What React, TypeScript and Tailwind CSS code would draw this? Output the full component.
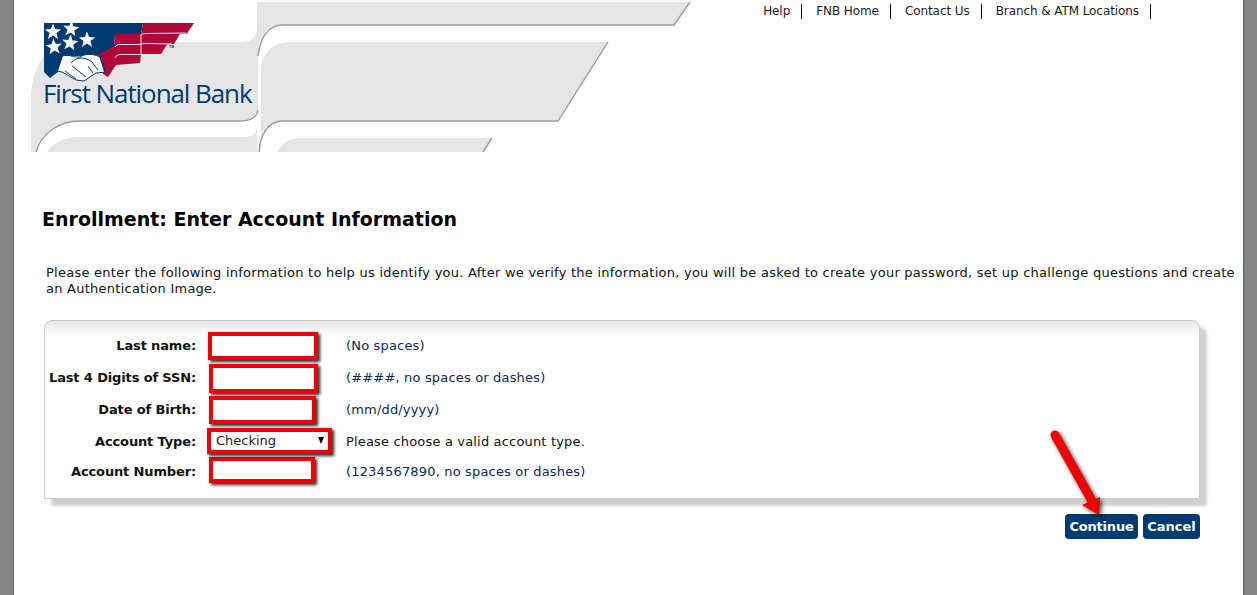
import React from "react";

function starPoints(cx: number, cy: number, r: number, rot = 0) {
  const pts: string[] = [];
  for (let i = 0; i < 10; i++) {
    const rad = i % 2 === 0 ? r : r * 0.42;
    const a = -Math.PI / 2 + (i * Math.PI) / 5 + rot;
    pts.push(`${(cx + rad * Math.cos(a)).toFixed(1)},${(cy + rad * Math.sin(a)).toFixed(1)}`);
  }
  return pts.join(" ");
}

function Banner() {
  return (
    <svg width="720" height="152" viewBox="0 0 720 152" className="absolute left-0 top-0">
      <g fill="#e5e5e5">
        <path d="M257,2 L690,2 L674,25 L283,25 C265,25 258,40 258,53 L258,108 C258,116 252,121 240,121 L80,121 C60,121 42,132 36,152 L31,152 L31,100 C31,70 45,42 70,42 L243,42 C252,42 257,36 257,28 Z" />
        <path d="M608,42 L558,121 L283,121 C268,121 260,135 259,152 L261,152 L261,70 C261,55 272,42 290,42 Z" />
        <path d="M47,152 C52,143 65,137 80,137 L245,137 C252,137 257,133 257,127 L257,152 Z" />
        <path d="M277,152 C282,143 290,138 300,138 L492,138 L483,152 Z" />
      </g>
      <g fill="none" stroke="#9b9b9b" strokeWidth="1.4">
        <path d="M690,2 L674,25 L283,25 C268,25 260,38 258,56" />
        <path d="M258,110 C257,116 252,121 240,121 L80,121 C60,121 42,132 36,152" />
        <path d="M608,42 L558,121 L283,121 C268,121 260,135 259,152" />
        <path d="M492,138 L483,152" />
      </g>
      <path d="M44,23 L143,23 L141,34 L115,35 L114,47 L97,56 L62,56 L58,72 L50,78 L44,72 Z" fill="#003a70" />
      <path d="M143,23 L194,23 L187,33.5 L180,34 L174,44 L167,44.5 L161,54 L141,54 L140,63 L116,65 L108,77 L103,74 L102,58 L97,55 L114,47 L115,34 L141,34 Z" fill="#b0063a" />
      <g fill="none" stroke="#f4e6ea" strokeWidth="1">
        <path d="M140,36 C141,34 143,33.5 146,33.5 L186,33" />
        <path d="M115,47 C116,45 118,44.5 121,44.5 L139,44.5 C141,44 143,43.5 146,43.5 L172,44" />
        <path d="M115,58 C116,55.5 118,54.5 121,54.5 L141,54.5" />
        <path d="M141,35 L141,54" />
      </g>
      <g fill="#ffffff">
        {[[53,32,0],[71,29,0.1],[87,40,0],[70,43,0.1],[54,47,-0.1]].map(([x,y,r],i)=>(
          <polygon key={i} points={starPoints(x,y,8.5,r)} />
        ))}
      </g>
      <path d="M62,56 C70,54 75,58 80,57 C86,53 94,54 100,57 L106,72 L96,73 L84,81 L76,80 L62,72 L57,71 Z" fill="#ffffff" stroke="#003a70" strokeWidth="1" />
      <path d="M71,63 C76,57 84,56 92,62 L98,70 M65,71 L76,79 M72,66 L86,77 M88,66 L93,73" fill="none" stroke="#003a70" strokeWidth="1" />
      <path d="M100,56 L105,72" stroke="#003a70" strokeWidth="1.8" />
      <path d="M62,56 L57,71" stroke="#003a70" strokeWidth="1.8" />
      <text x="169" y="48" fontSize="3.5" fontWeight="700" fill="#003a70" fontFamily="'Liberation Sans',sans-serif">TM</text>
    </svg>
  );
}

const links = ["Help", "FNB Home", "Contact Us", "Branch & ATM Locations"];

const fieldBox = "h-full border-[4px] border-[#f00000] bg-white shadow-[2px_2px_3px_rgba(0,0,0,0.85)]";

const rows: { label: string; row: string; text: string; field: React.ReactNode; hint: string; dark?: boolean }[] = [
  { label: "Last name:", row: "mt-[11px] h-[28px]", text: "pb-px", field: <input type="text" className={`ml-px w-[110px] ${fieldBox}`} />, hint: "(No spaces)" },
  { label: "Last 4 Digits of SSN:", row: "mt-[4px] h-[29px]", text: "pb-px", field: <input type="text" className={`ml-[2px] w-[109px] ${fieldBox}`} />, hint: "(####, no spaces or dashes)" },
  { label: "Date of Birth:", row: "mt-[3px] h-[28px]", text: "", field: <input type="text" className={`ml-[2px] w-[107px] ${fieldBox}`} />, hint: "(mm/dd/yyyy)" },
  {
    label: "Account Type:",
    row: "mt-[4px] h-[26px]",
    text: "pt-px",
    field: (
      <div className={`relative flex w-[125px] items-center pl-[5px] text-[13px] text-[#222] ${fieldBox}`}>
        Checking
        <span className="absolute right-[4px] top-[5px] h-0 w-0 border-x-[3.5px] border-t-[7px] border-x-transparent border-t-black" />
      </div>
    ),
    hint: "Please choose a valid account type.",
    dark: true,
  },
  { label: "Account Number:", row: "mt-[3px] h-[26px]", text: "pt-[3px]", field: <input type="text" className={`ml-[2px] w-[106px] ${fieldBox}`} />, hint: "(1234567890, no spaces or dashes)" },
];

export default function App() {
  return (
    <div className="h-[595px] overflow-hidden bg-[#848484] px-[13px] font-['DejaVu_Sans','Liberation_Sans',sans-serif] text-[#111]">
      <div className="relative h-full border-x border-[#566] bg-white">
        <div className="relative -ml-[14px] h-[152px]">
          <Banner />
          <div className="absolute left-[43px] top-[76px] font-['Open_Sans',sans-serif] text-[26px] font-medium leading-[34px] tracking-[-1.08px] whitespace-nowrap text-[#003a70]">
            First National Bank
          </div>
        </div>
        <nav className="absolute right-[92px] top-[4px] flex text-[12px] leading-[15px] tracking-[-0.08px] text-[#1a1a1a]">
          {links.map((l) => (
            <span key={l} className="border-r border-black pl-[14px] pr-[11px] first:pl-0">
              {l}
            </span>
          ))}
        </nav>

        <h1 className="ml-[28px] mt-[55px] text-[19px] leading-[24px] font-bold text-black">
          Enrollment: Enter Account Information
        </h1>
        <p className="ml-[32px] mr-[3px] mt-[34px] text-[13px] leading-[16px] tracking-[0.25px] text-[#111]">
          Please enter the following information to help us identify you. After we verify the information, you will be asked to create your password, set up challenge questions and create an Authentication Image.
        </p>

        <div className="ml-[30px] mt-[23px] h-[179px] w-[1156px] rounded-t-[8px] border border-[#cccccc] bg-[linear-gradient(#e6e6e6,#ffffff_15px)] shadow-[7px_7px_3px_#d3cfcf]">
          {rows.map((r) => (
            <div key={r.label} className={`flex items-stretch ${r.row}`}>
              <label className={`flex w-[151px] items-center justify-end text-[13px] font-bold tracking-[-0.14px] text-[#111] ${r.text}`}>
                {r.label}
              </label>
              <div className="ml-[11px] flex w-[139px] items-stretch">{r.field}</div>
              <span className={`flex items-center text-[13px] tracking-[0.17px] ${r.text} ${r.dark ? "text-[#111]" : "text-[#0a2a55]"}`}>{r.hint}</span>
            </div>
          ))}
        </div>

        <div className="absolute left-[1051px] top-[514px] flex gap-[5px] text-[13px] leading-[25px] font-bold text-white">
          <button className="h-[25px] w-[73px] rounded-[4px] bg-[#003a70] tracking-[-0.2px]">Continue</button>
          <button className="h-[25px] w-[57px] rounded-[4px] bg-[#003a70]">Cancel</button>
        </div>

        <svg width="60" height="100" viewBox="0 0 60 100" className="absolute left-[1035px] top-[425px] drop-shadow-[2px_2px_2px_rgba(0,0,0,0.7)]">
          <path d="M6,10 L43,76" stroke="#f00000" strokeWidth="9" strokeLinecap="round" fill="none" />
          <path d="M33,80 L51,72 L50,90 Z" fill="#f00000" />
        </svg>
      </div>
    </div>
  );
}
